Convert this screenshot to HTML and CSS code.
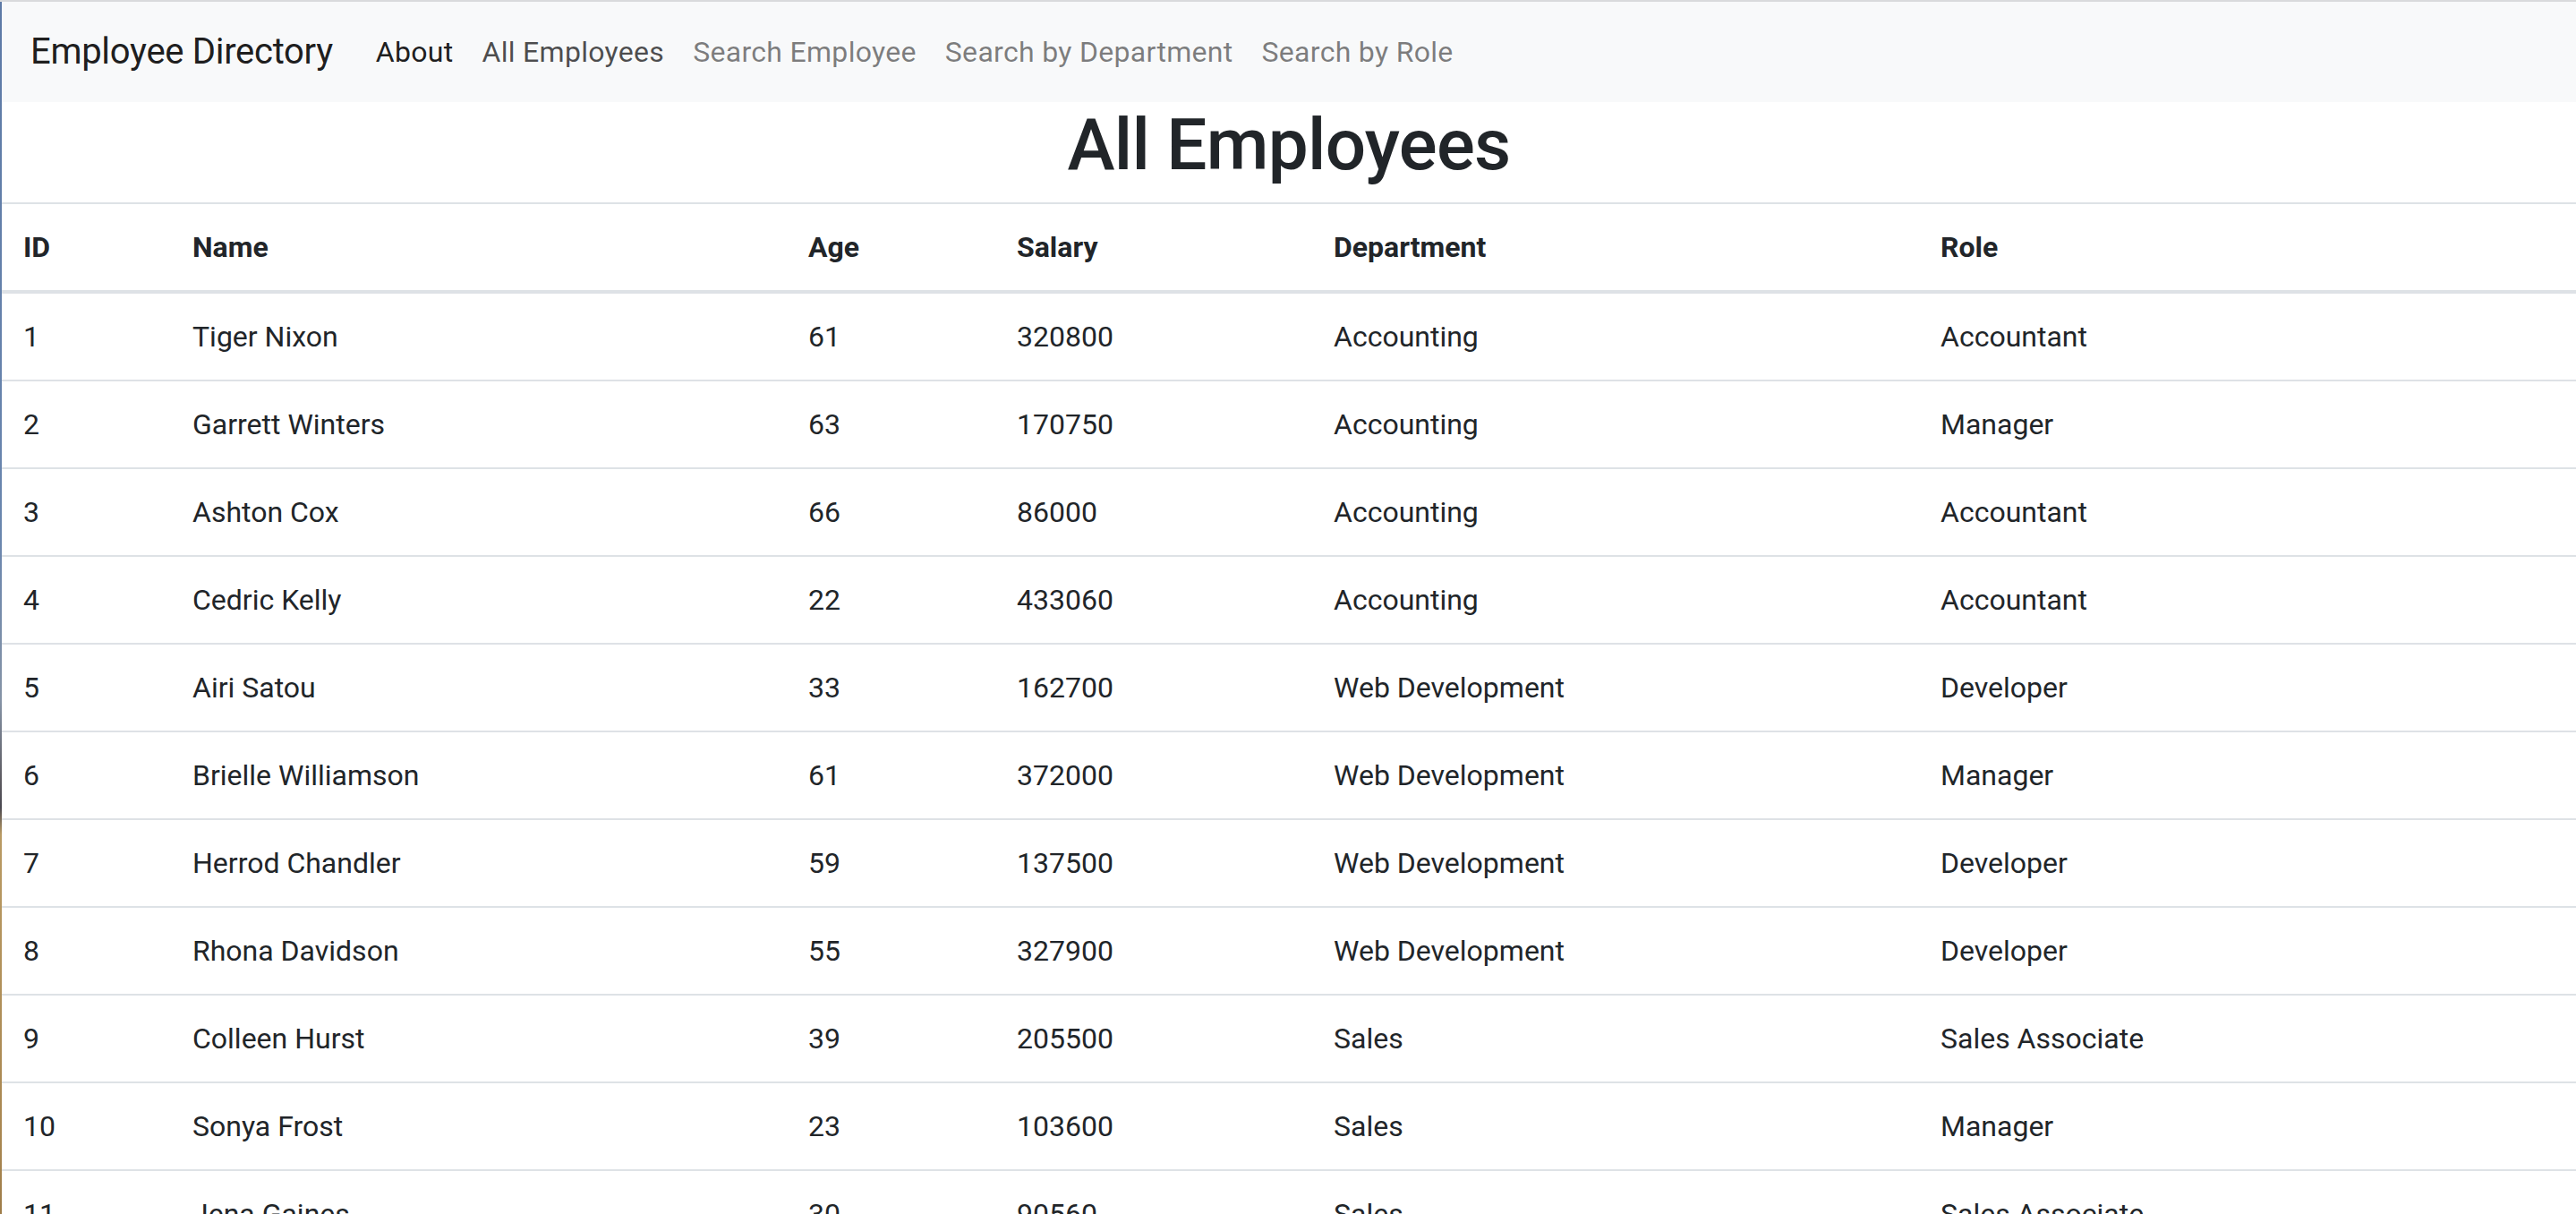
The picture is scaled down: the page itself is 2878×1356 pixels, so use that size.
FILE: index.html
```html
<!DOCTYPE html>
<html lang="en">
<head>
<meta charset="utf-8">
<title>Employee Directory</title>
<link rel="stylesheet" href="styles.css">
</head>
<body>
<div class="frame">
  <div class="edge"></div>
  <div class="page">
    <nav class="navbar">
      <a class="brand" href="#">Employee Directory</a>
      <ul class="nav">
        <li><a class="nav-link active" href="#">About</a></li>
        <li><a class="nav-link hover" href="#">All Employees</a></li>
        <li><a class="nav-link" href="#">Search Employee</a></li>
        <li><a class="nav-link" href="#">Search by Department</a></li>
        <li><a class="nav-link" href="#">Search by Role</a></li>
      </ul>
    </nav>
    <h1 class="title">All Employees</h1>
    <table class="table">
      <colgroup>
        <col class="c-id"><col class="c-name"><col class="c-age"><col class="c-salary"><col class="c-dept"><col class="c-role">
      </colgroup>
      <thead>
        <tr><th>ID</th><th>Name</th><th>Age</th><th>Salary</th><th>Department</th><th>Role</th></tr>
      </thead>
      <tbody>
        <tr><td>1</td><td>Tiger Nixon</td><td>61</td><td>320800</td><td>Accounting</td><td>Accountant</td></tr>
        <tr><td>2</td><td>Garrett Winters</td><td>63</td><td>170750</td><td>Accounting</td><td>Manager</td></tr>
        <tr><td>3</td><td>Ashton Cox</td><td>66</td><td>86000</td><td>Accounting</td><td>Accountant</td></tr>
        <tr><td>4</td><td>Cedric Kelly</td><td>22</td><td>433060</td><td>Accounting</td><td>Accountant</td></tr>
        <tr><td>5</td><td>Airi Satou</td><td>33</td><td>162700</td><td>Web Development</td><td>Developer</td></tr>
        <tr><td>6</td><td>Brielle Williamson</td><td>61</td><td>372000</td><td>Web Development</td><td>Manager</td></tr>
        <tr><td>7</td><td>Herrod Chandler</td><td>59</td><td>137500</td><td>Web Development</td><td>Developer</td></tr>
        <tr><td>8</td><td>Rhona Davidson</td><td>55</td><td>327900</td><td>Web Development</td><td>Developer</td></tr>
        <tr><td>9</td><td>Colleen Hurst</td><td>39</td><td>205500</td><td>Sales</td><td>Sales Associate</td></tr>
        <tr><td>10</td><td>Sonya Frost</td><td>23</td><td>103600</td><td>Sales</td><td>Manager</td></tr>
        <tr><td>11</td><td>Jena Gaines</td><td>30</td><td>90560</td><td>Sales</td><td>Sales Associate</td></tr>
        <tr><td>12</td><td>Quinn Flynn</td><td>22</td><td>342000</td><td>Sales</td><td>Manager</td></tr>
      </tbody>
    </table>
  </div>
</div>
</body>
</html>
```
FILE: styles.css
```css
html, body {
  margin: 0;
  padding: 0;
  background: #fff;
}
body {
  font-family: Roboto, "Liberation Sans", Arial, sans-serif;
  color: #212529;
  font-size: 32px;
  line-height: 1.5;
  overflow: hidden;
  height: 1356px;
}
.frame {
  display: flex;
  border-top: 2px solid #d9dadc;
  min-height: 1354px;
}
.edge {
  width: 2px;
  flex: none;
  background: linear-gradient(to bottom, #5d7aa6 0%, #6a86ae 40%, #8593a6 52%, #5c5a60 58%, #4a4850 60%, #b99a63 62%, #a88650 85%, #8c6a3c 100%);
}
.page {
  flex: 1;
  min-width: 0;
}
.navbar {
  display: flex;
  align-items: center;
  background: #f8f9fa;
  padding: 16px 32px;
}
.brand {
  font-size: 40px;
  line-height: 60px;
  padding: 10px 0;
  margin-right: 32px;
  color: rgba(0,0,0,.9);
  text-decoration: none;
  letter-spacing: -0.3px;
}
.nav {
  display: flex;
  list-style: none;
  margin: 0;
  padding: 0;
}
.nav-link {
  display: block;
  padding: 16px 16px;
  line-height: 48px;
  color: rgba(0,0,0,.5);
  text-decoration: none;
  letter-spacing: 0.3px;
}
.nav-link.active { color: rgba(0,0,0,.9); }
.nav-link.hover { color: rgba(0,0,0,.7); }
.title {
  margin: 0 0 16px;
  text-align: center;
  font-size: 80px;
  font-weight: 500;
  line-height: 96px;
  letter-spacing: -0.7px;
}
.table {
  width: 100%;
  border-collapse: collapse;
  table-layout: fixed;
}
.c-id { width: 189px; }
.c-name { width: 688px; }
.c-age { width: 233px; }
.c-salary { width: 354px; }
.c-dept { width: 678px; }
.table th, .table td {
  text-align: left;
  padding: 24px;
  line-height: 48px;
  border-top: 2px solid #dee2e6;
  white-space: nowrap;
}
.table th {
  font-weight: 700;
  border-bottom: 4px solid #dee2e6;
}
.table tbody tr:first-child td {
  border-top: 4px solid #dee2e6;
}
```
